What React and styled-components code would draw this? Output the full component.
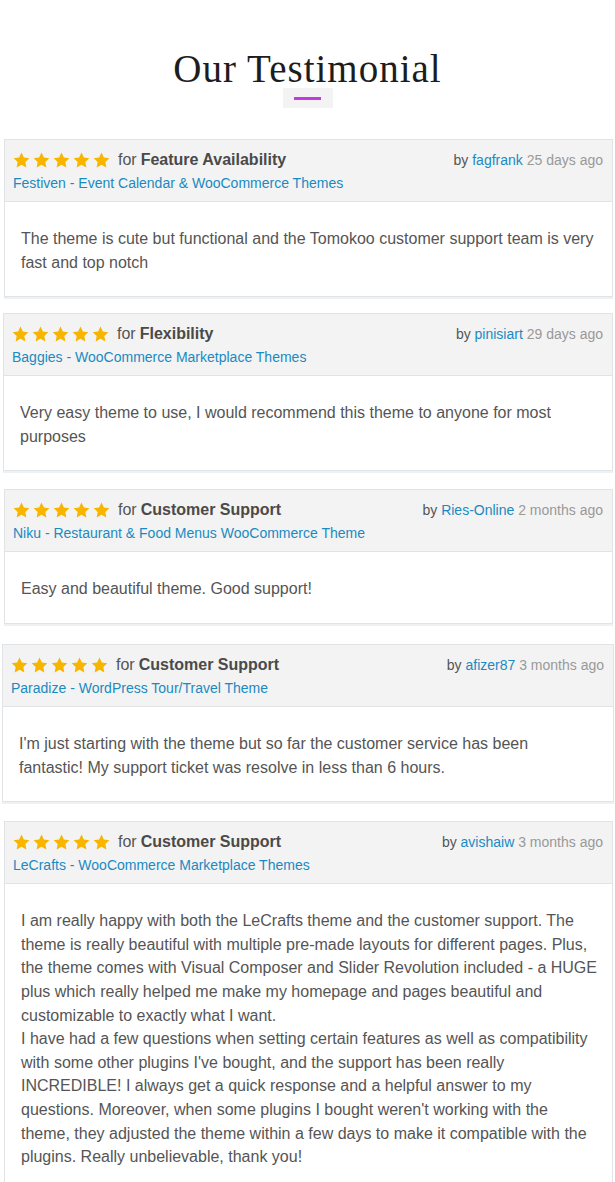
import React from 'react';
import styled, { createGlobalStyle } from 'styled-components';

const GlobalStyle = createGlobalStyle`
	html, body {
		margin: 0;
		padding: 0;
		background: #fff;
	}
	body {
		font-family: "Liberation Sans", Arial, sans-serif;
	}
`

const Page = styled.div`
	width: 615px;
	padding-top: 46px;
`

const TitleBlock = styled.div`
	display: flex;
	flex-direction: column;
	align-items: center;
	margin-bottom: 31px;
`

const Title = styled.h2`
	font-family: "Liberation Serif", "DejaVu Serif", serif;
	font-weight: 400;
	font-size: 39px;
	letter-spacing: 1px;
	color: #1d1d1d;
	margin: 0;
	line-height: 46px;
`

const Divider = styled.div`
	width: 50px;
	height: 20px;
	background: #f3f3f3;
	display: flex;
	align-items: center;
	justify-content: center;
	margin-top: -4px;

	&::after {
		content: '';
		width: 27px;
		height: 3px;
		background: #c33be0;
	}
`

const List = styled.div`
	display: flex;
	flex-direction: column;
`

const Card = styled.div`
	margin-top: ${p => p.$top}px;
	margin-left: ${p => p.$left}px;
	width: ${p => p.$width}px;
	border: 1px solid #e1e4e6;
	background: #fff;
	box-shadow: 0 2px 0 #eef1f3;
`

const Header = styled.div`
	background: #f3f3f3;
	border-bottom: 1px solid #e1e4e6;
	padding: 9px 8px 9px 8px;
	display: flex;
	justify-content: space-between;
	align-items: flex-start;
	height: 43px;
`

const HeadLeft = styled.div`
	display: flex;
	flex-direction: column;
	gap: 3px;
`

const RatingRow = styled.div`
	display: flex;
	align-items: center;
	font-size: 16px;
	color: #555;
	line-height: 22px;
`

const Stars = styled.span`
	display: inline-flex;
	gap: 3px;
	margin-right: 8px;
`

const Strong = styled.b`
	color: #4a4a4a;
	margin-left: 4px;
`

const Link = styled.a`
	color: #1a8ac2;
	text-decoration: none;
	font-size: 14px;
	line-height: 18px;
`

const Meta = styled.div`
	font-size: 14px;
	color: #555;
	line-height: 18px;
	padding-top: 2px;
	padding-right: 1px;
`

const Ago = styled.span`
	color: #999;
`

const Body = styled.div`
	padding: 25px ${p => p.$right}px 22px ${p => p.$pad}px;
	font-size: 16px;
	line-height: 23.6px;
	color: #555;
`

const Star = () => (
	<svg width="17" height="16" viewBox="0 0 24 23">
		<path d="M12 0.8l3.4 7.2 7.9 1-5.8 5.5 1.5 7.8L12 18.5l-7 3.8 1.5-7.8L0.7 9l7.9-1z" fill="#f7b500" />
	</svg>
)

const reviews = [
	{
		top: 0, left: 4, width: 607, pad: 16, right: 14,
		topic: 'Feature Availability',
		product: 'Festiven - Event Calendar & WooCommerce Themes',
		user: 'fagfrank', ago: '25 days ago',
		text: ['The theme is cute but functional and the Tomokoo customer support team is very fast and top notch'],
	},
	{
		top: 16, left: 3, width: 608, pad: 16, right: 14,
		topic: 'Flexibility',
		product: 'Baggies - WooCommerce Marketplace Themes',
		user: 'pinisiart', ago: '29 days ago',
		text: ['Very easy theme to use, I would recommend this theme to anyone for most purposes'],
	},
	{
		top: 18, left: 4, width: 607, pad: 16, right: 14,
		topic: 'Customer Support',
		product: 'Niku - Restaurant & Food Menus WooCommerce Theme',
		user: 'Ries-Online', ago: '2 months ago',
		text: ['Easy and beautiful theme. Good support!'],
	},
	{
		top: 20, left: 2, width: 610, pad: 16, right: 22,
		topic: 'Customer Support',
		product: 'Paradize - WordPress Tour/Travel Theme',
		user: 'afizer87', ago: '3 months ago',
		text: ["I'm just starting with the theme but so far the customer service has been fantastic! My support ticket was resolve in less than 6 hours."],
	},
	{
		top: 19, left: 4, width: 607, pad: 16, right: 14,
		topic: 'Customer Support',
		product: 'LeCrafts - WooCommerce Marketplace Themes',
		user: 'avishaiw', ago: '3 months ago',
		text: [
			'I am really happy with both the LeCrafts theme and the customer support. The theme is really beautiful with multiple pre-made layouts for different pages. Plus, the theme comes with Visual Composer and Slider Revolution included - a HUGE plus which really helped me make my homepage and pages beautiful and customizable to exactly what I want.',
			"I have had a few questions when setting certain features as well as compatibility with some other plugins I've bought, and the support has been really INCREDIBLE! I always get a quick response and a helpful answer to my questions. Moreover, when some plugins I bought weren't working with the theme, they adjusted the theme within a few days to make it compatible with the plugins. Really unbelievable, thank you!",
		],
	},
]

const Review = ({ r }) => (
	<Card $top={r.top} $left={r.left} $width={r.width}>
		<Header>
			<HeadLeft>
				<RatingRow>
					<Stars>{[0, 1, 2, 3, 4].map(i => <Star key={i} />)}</Stars>
					for <Strong>{r.topic}</Strong>
				</RatingRow>
				<Link href="#">{r.product}</Link>
			</HeadLeft>
			<Meta>by <Link href="#">{r.user}</Link> <Ago>{r.ago}</Ago></Meta>
		</Header>
		<Body $pad={r.pad} $right={r.right}>
			{r.text.map((t, i) => <div key={i}>{t}</div>)}
		</Body>
	</Card>
)

const App = () => (
	<Page>
		<GlobalStyle />
		<TitleBlock>
			<Title>Our Testimonial</Title>
			<Divider />
		</TitleBlock>
		<List>
			{reviews.map((r, i) => <Review key={i} r={r} />)}
		</List>
	</Page>
)

export default App;
